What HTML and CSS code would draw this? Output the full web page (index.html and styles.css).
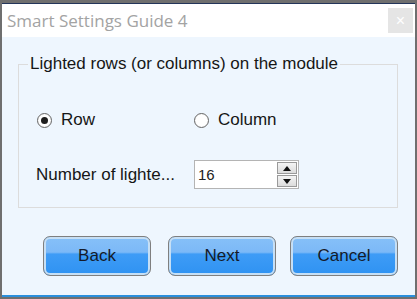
FILE: index.html
```html
<!DOCTYPE html>
<html lang="en">
<head>
    <meta charset="UTF-8">
    <meta name="viewport" content="width=device-width, initial-scale=1.0">
    <title>Smart Settings Guide 4</title>
    <link rel="stylesheet" href="styles.css">
</head>
<body>
    <div class="window">
        <div class="titlebar">
            <span class="title">Smart Settings Guide 4</span>
            <span class="close">&#215;</span>
        </div>
        <div class="content">
            <fieldset class="group">
                <legend>Lighted rows (or columns) on the module</legend>
                <div class="radios">
                    <label class="radio checked"><span class="dot"></span>Row</label>
                    <label class="radio"><span class="dot"></span>Column</label>
                </div>
                <div class="field">
                    <span class="field-label">Number of lighte...</span>
                    <div class="spin">
                        <span class="spin-value">16</span>
                        <div class="spin-btns">
                            <span class="spin-btn up"></span>
                            <span class="spin-btn down"></span>
                        </div>
                    </div>
                </div>
            </fieldset>
            <div class="buttons">
                <button class="btn back">Back</button>
                <button class="btn next">Next</button>
                <button class="btn cancel">Cancel</button>
            </div>
        </div>
    </div>
</body>
</html>
```
FILE: styles.css
```css
body {
    margin: 0;
    font-family: "Liberation Sans", Arial, sans-serif;
    background-color: #6f6f6f;
}
.window {
    width: 413px;
    height: 294px;
    border: 2px solid #6f6f6f;
    border-top-width: 3px;
    display: flex;
    flex-direction: column;
}
.titlebar {
    height: 33px;
    background-color: white;
    border-top: 1px solid #23355a;
    display: flex;
    align-items: center;
    justify-content: space-between;
}
.title {
    font-family: "Open Sans", "Noto Sans", sans-serif;
    font-size: 17px;
    color: #a3a3a3;
    margin-left: 5px;
}
.close {
    width: 25px;
    height: 25px;
    margin-right: 2px;
    background-color: #e5e5e5;
    color: white;
    font-size: 16px;
    display: flex;
    align-items: center;
    justify-content: center;
}
.content {
    flex: 1;
    background-color: #eef6fe;
    border-bottom: 2px solid #2a8fdc;
    display: flex;
    flex-direction: column;
}
.group {
    margin: 17px 17px 0 16px;
    padding: 0;
    height: 152px;
    border: 1px solid #dcdcdc;
}
.group legend {
    margin-left: 9px;
    padding: 0 2px;
    font-size: 17px;
    color: #161616;
}
.radios {
    display: flex;
    margin: 35px 0 0 18px;
    height: 22px;
    align-items: center;
}
.radio {
    display: flex;
    align-items: center;
    font-size: 17px;
    color: #161616;
    width: 157px;
}
.dot {
    width: 13px;
    height: 13px;
    border: 1px solid #666;
    border-radius: 50%;
    background: radial-gradient(circle, #fff 55%, #e4e4e4 100%);
    margin-right: 9px;
    display: flex;
    align-items: center;
    justify-content: center;
}
.radio.checked .dot::after {
    content: "";
    width: 7px;
    height: 7px;
    border-radius: 50%;
    background-color: #1e1e1e;
}
.field {
    display: flex;
    align-items: center;
    margin: 29px 0 0 17px;
}
.field-label {
    font-size: 17px;
    color: #161616;
    width: 158px;
}
.spin {
    width: 103px;
    height: 27px;
    border: 1px solid #b4b4b4;
    background-color: white;
    display: flex;
    align-items: center;
    justify-content: space-between;
}
.spin-value {
    font-size: 15px;
    color: #222;
    margin-left: 3px;
}
.spin-btns {
    display: flex;
    flex-direction: column;
    gap: 1px;
    margin-right: 1px;
}
.spin-btn {
    width: 18px;
    height: 10px;
    border: 1px solid #9a9a9a;
    background: linear-gradient(#f4f4f4, #dcdcdc);
    display: flex;
    align-items: center;
    justify-content: center;
}
.spin-btn::after {
    content: "";
    border-left: 4px solid transparent;
    border-right: 4px solid transparent;
}
.up::after {
    border-bottom: 5px solid #111;
}
.down::after {
    border-top: 5px solid #111;
}
.buttons {
    display: flex;
    margin: 28px 0 0 41px;
}
.btn {
    width: 108px;
    height: 40px;
    border: 1px solid #7f7f7f;
    border-radius: 7px;
    box-shadow: inset 0 0 0 2px #c6dff5;
    background: linear-gradient(#86c0f8 0%, #7cb9f7 40%, #3e9cf6 45%, #2f92f2 100%);
    font-family: "Liberation Sans", Arial, sans-serif;
    font-size: 17px;
    color: #151a28;
    padding: 0;
}
.next {
    margin-left: 17px;
}
.cancel {
    margin-left: 14px;
}
```
